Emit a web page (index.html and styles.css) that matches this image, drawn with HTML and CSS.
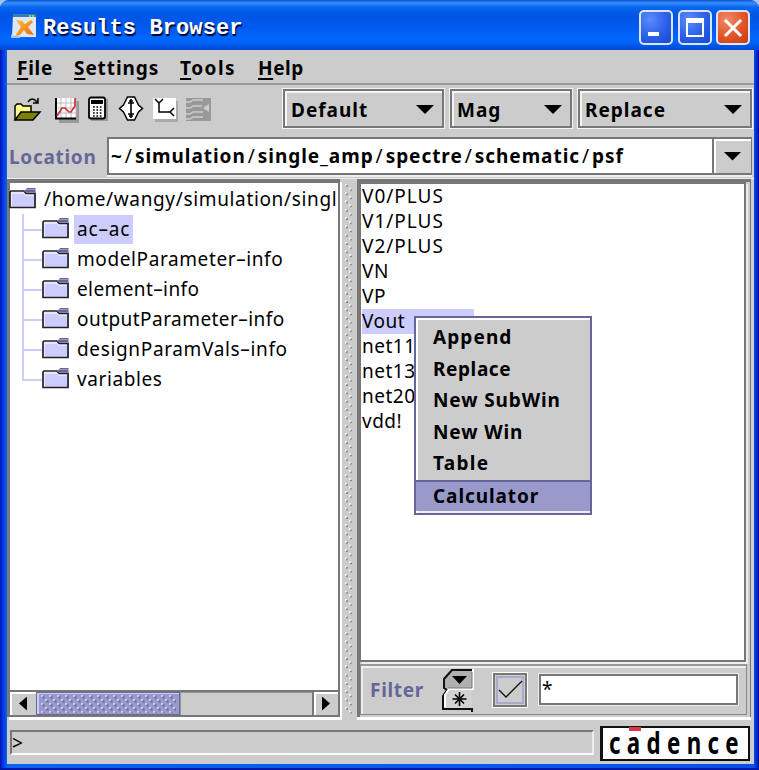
FILE: index.html
```html
<!DOCTYPE html>
<html lang="en">
<head>
<meta charset="utf-8">
<title>Results Browser</title>
<link rel="stylesheet" href="styles.css">
</head>
<body>
<div class="window">
  <header class="titlebar">
    <svg class="app-icon" width="27" height="25" viewBox="0 0 27 25">
      <defs><linearGradient id="orange" x2="1" y2="1"><stop stop-color="#ffc13b"/><stop offset="1" stop-color="#f0650c"/></linearGradient></defs>
      <path d="M2 1h23v22H1z" fill="#dce9f5"/><path d="M2 0h23v3H2z" fill="#3b79b8"/>
      <path d="M18 2h2M21 2h2" stroke="#7be04d" stroke-width="2"/><path d="M0 20l2 2h7v2H0z" fill="#9ec0f5"/>
      <path d="M5 6l6 1 3 3 6-4 2 2-5 5 6 8-7-1-3-4-4 5-5 1 6-9z" fill="url(#orange)"/>
    </svg>
    <h1 class="title">Results Browser</h1>
    <div class="controls">
      <span class="control"><svg width="31" height="31" viewBox="0 0 31 31"><path d="M7 20h11v4H7z" fill="#fff"/></svg></span>
      <span class="control"><svg width="31" height="31" viewBox="0 0 31 31"><path d="M7 8v16h16V8z" fill="none" stroke="#fff" stroke-width="2"/><path d="M6 6h18v5H6z" fill="#fff"/></svg></span>
      <span class="control close"><svg width="31" height="31" viewBox="0 0 31 31"><path d="M7 8l16 16M23 8L7 24" stroke="#fff" stroke-width="3"/></svg></span>
    </div>
  </header>
  <main class="client">
    <nav class="menubar">
      <span class="m-file"><u>F</u>ile</span><span class="m-settings"><u>S</u>ettings</span><span class="m-tools"><u>T</u>ools</span><span class="m-help"><u>H</u>elp</span>
    </nav>
    <div class="toolbar">
      <svg class="tools" width="204" height="34" viewBox="0 0 204 34">
        <g stroke="#000" stroke-width="1.5">
          <path d="M2 24V10l2-2h4l2 2h8v6" fill="#ffff8c"/><path d="M2 24l6-8h19l-7 8z" fill="#808000"/>
          <path d="M15 6q4-6 9 0M25 2v5h-5" fill="none"/>
        </g>
        <path d="M46 5h20v22H46z" fill="#999"/><path d="M43 2h20v20H43z" fill="#fff"/>
        <path d="M48 2v20M53 2v20M58 2v20M63 2v20M43 7h20M43 12h20M43 17h20" stroke="#bbb"/>
        <path d="M43 2v20.500h20" fill="none" stroke="#000" stroke-width="2"/><path d="M44 20l5-8h3l4 4h2l4-6V2" fill="none" stroke="#d22e3d" stroke-width="1.7"/>
        <path d="M78 3h17v22H78z" fill="#999"/><rect x="76" y="1.500" width="16" height="21" rx="2" fill="#fff" stroke="#000" stroke-width="1.800"/>
        <path d="M78 4h12v4H78z"/><path d="M80 11h9M80 14h9M80 17h9M80 20h9" stroke="#000" stroke-width="1.500" stroke-dasharray="1.700 1.700"/>
        <path d="M114.500 1h7l3 6 1 2 4 3.500-4 3.500-1 2-3 6h-7l-3-6-1-2-4-3.500 4-3.500 1-2z" fill="#fff" stroke="#000" stroke-width="1.500"/>
        <path d="M118 3v19M115 7h6M115 18h6M116 5h4M116 20h4" stroke="#000" stroke-width="1.600"/>
        <path d="M142 5h23v21h-23z" fill="#aaa"/><path d="M140 2h23v21h-23z" fill="#fff"/>
        <path d="M142 3l4 4 4-4M146 7v9h11M161 12l-4 4 4 4" fill="none" stroke="#000" stroke-width="1.500"/>
        <path d="M173 2h25v23h-25z" fill="#999"/><path d="M173 6h4l3-2h10M173 12h4l3-2h9M173 18h4l3-2h10M173 23h4l3-2h10" fill="none" stroke="#ccc" stroke-width="1.500"/><path d="M196 8v8l-6-4z" fill="#ccc"/>
      </svg>
      <div class="combo c-default"><span>Default</span><i class="down"></i></div>
      <div class="combo c-mag"><span>Mag</span><i class="down"></i></div>
      <div class="combo c-replace"><span>Replace</span><i class="down"></i></div>
    </div>
    <div class="location">
      <label class="loc-label">Location</label>
      <div class="loc-box"><span class="path">~<i>/</i>simulation<i>/</i>single_amp<i>/</i>spectre<i>/</i>schematic<i>/</i>psf</span><span class="loc-button"><i class="down"></i></span></div>
    </div>
    <div class="split">
      <section class="left-pane">
        <div class="tree">
          <div class="node root"><svg class="folder"><use href="#folder"/></svg><span class="t-root">/home/wangy/simulation/singl</span></div>
          <div class="children">
            <div class="node"><svg class="folder"><use href="#folder"/></svg><span class="selected">ac–ac</span></div>
            <div class="node"><svg class="folder"><use href="#folder"/></svg><span class="t-model">modelParameter–info</span></div>
            <div class="node"><svg class="folder"><use href="#folder"/></svg><span class="t-element">element–info</span></div>
            <div class="node"><svg class="folder"><use href="#folder"/></svg><span class="t-output">outputParameter–info</span></div>
            <div class="node"><svg class="folder"><use href="#folder"/></svg><span class="t-design">designParamVals–info</span></div>
            <div class="node"><svg class="folder"><use href="#folder"/></svg><span class="t-variables">variables</span></div>
          </div>
        </div>
        <div class="scrollbar"><span class="arrow"><i class="west"></i></span><span class="thumb"><svg width="135" height="18"><rect width="135" height="18" fill="url(#grip)"/></svg></span><span class="track"></span><span class="arrow last"><i class="east"></i></span></div>
      </section>
      <div class="divider"><svg width="8" height="530"><rect width="8" height="530" fill="url(#dots)"/></svg></div>
      <section class="right-pane">
        <ul class="signals">
          <li class="caps">V0/PLUS</li><li class="caps">V1/PLUS</li><li class="caps">V2/PLUS</li><li>VN</li><li>VP</li><li class="picked">Vout</li><li class="net">net11</li><li class="net">net13</li><li class="net">net20</li><li>vdd!</li>
        </ul>
        <div class="filter">
          <span class="filter-label">Filter</span>
          <svg class="switch" width="34" height="46" viewBox="0 0 34 46">
            <path d="M3 21V11l8-8h20v19H5z" fill="#b0b0b0"/><path d="M31 22H7l-5 5v15h29z" fill="#d2d2d2"/>
            <path d="M31 3H11l-8 9v9l3 2-4 6v13h29v3" fill="none" stroke="#111" stroke-width="2"/><path d="M32 2v20H8l-4 6v12" fill="none" stroke="#fff" stroke-width="2"/><path d="M31 5v16H7" fill="none" stroke="#777"/>
            <path d="M11 9h15l-7.500 8z"/><path d="M18.500 25v14M11.500 32h14M14 27.500l9 9M23 27.500l-9 9" stroke="#000" stroke-width="1.600"/>
          </svg>
          <span class="check"><svg width="28" height="28" viewBox="0 0 28 28"><path d="M3 14l7 7L26 5" fill="none" stroke="#111" stroke-width="1.300"/></svg></span>
          <span class="filter-input">*</span>
        </div>
      </section>
    </div>
    <footer class="status">
      <div class="message">&gt;</div>
      <div class="brand"><span>cadence</span><i class="macron"></i></div>
    </footer>
  </main>
  <div class="popup">
    <div class="p-append">Append</div><div class="p-replace">Replace</div><div class="p-sub">New SubWin</div><div class="p-win">New Win</div><div class="p-table">Table</div><div class="hover">Calculator</div>
  </div>
</div>
<svg class="defs" width="0" height="0">
  <defs>
    <symbol id="folder" viewBox="0 0 28 24"><path d="M1 5h26v16H1z" fill="#ccf"/><path d="M2 20V6h13l2 2h8" fill="none" stroke="#fff" stroke-width="1.200"/><path d="M1 20.500V5l1-1h13l2 2.500h9v14z" fill="none" stroke="#222" stroke-width="1.700"/><path d="M15 4.500L18 1h8.500v4.500H17z" fill="#669"/><path d="M17 2.500h9" stroke="#99b"/></symbol>
    <pattern id="dots" width="8" height="8.300" patternUnits="userSpaceOnUse"><path d="M0 0h1.800v1.800H0zM4 4h1.800v1.800H4z" fill="#fff"/><path d="M1.200 1.200h1.600v1.600H1.200zM5.200 5.200h1.600v1.600H5.200z" fill="#777"/></pattern>
    <pattern id="grip" width="8" height="8" patternUnits="userSpaceOnUse"><path d="M0 0h2v2H0zM4 4h2v2H4z" fill="#ccf"/><path d="M1.500 1.500h2v2h-2zM5.500 5.500h2v2h-2z" fill="#669"/></pattern>
  </defs>
</svg>
</body>
</html>
```
FILE: styles.css
```css
* { box-sizing: border-box; }
body { margin: 0; font-family: "Noto Sans", sans-serif; font-size: 19px; color: #000; background: #a8c0ee; overflow: hidden; }
.window { position: relative; width: 759px; height: 770px; border-radius: 9px 9px 0 0; background: linear-gradient(90deg, #0010b8 0, #0038dc 3px, #0a63f0 7px, #0a50e8 754px, #0030d8 756px, #0010a0 759px); overflow: hidden; border-bottom: 2px solid #0018a8; }
.titlebar { height: 50px; display: flex; align-items: flex-start; padding: 0 9px 0 11px; background: linear-gradient(#0b53d0 0, #3590ff 3px, #0a68ee 7px, #0056e5 14px, #0058ee 27px, #0068ff 38px, #0062f5 43px, #0045d0 50px); }
.app-icon { margin-top: 14px; }
.title { margin: 14px 0 0 5px; font: bold 22px/30px "Liberation Mono", monospace; letter-spacing: .1px; color: #fff; text-shadow: 1px 2px 1px #003; white-space: pre; }
.controls { display: flex; gap: 4px; margin: 10px 0 0 auto; }
.control { width: 34px; height: 35px; border: 2px solid #dbe5ff; border-radius: 5px; background: radial-gradient(circle at 30% 25%, #5c8bf8, #2a60ea 55%, #1747d0); }
.control:first-child { margin-right: 1px; }
.control.close { background: radial-gradient(circle at 30% 25%, #f08b6e, #e15427 55%, #c63b0c); }
.control svg { display: block; }
.client { margin-left: 7px; width: 747px; height: 714px; background: #ccc; }
.menubar { height: 35px; border-bottom: 2px solid #999; font-weight: bold; line-height: 36px; display: flex; padding-left: 10px; }
.menubar span { flex: none; }
.menubar u { text-decoration-thickness: 2px; text-underline-offset: 3px; }
.m-file { width: 57px; letter-spacing: .7px; }
.m-settings { width: 106px; letter-spacing: .9px; }
.m-tools { width: 78px; letter-spacing: 1.500px; }
.m-help { letter-spacing: .6px; }
.toolbar { height: 51px; padding: 4px 3px 0 6px; display: flex; }
.tools { flex: none; margin-top: 7px; }
.combo { height: 39px; border: 2px solid #777; outline: 1px solid #f5f5f5; box-shadow: inset 2px 2px #f5f5f5; display: flex; align-items: center; justify-content: space-between; padding: 2px 8px 0 6px; font-weight: bold; letter-spacing: 1px; flex: none; }
.c-default { width: 161px; margin-left: 66px; }
.c-mag { width: 122px; margin-left: 6px; padding-left: 5px; }
.c-replace { width: 174px; margin-left: 6px; padding-left: 5px; }
.down { width: 18px; height: 9px; background: #000; clip-path: polygon(0 0, 100% 0, 50% 100%); }
.location { height: 42px; display: flex; padding: 1px 2px 0 2px; }
.loc-label { width: 98px; color: #669; font-weight: bold; line-height: 41px; letter-spacing: .7px; }
.loc-box { flex: 1; height: 38px; display: flex; background: #fff; border: 2px solid #777; border-right-width: 1px; box-shadow: 0 2px #eee; }
.path { flex: 1; font-weight: bold; line-height: 34px; padding-left: 2px; letter-spacing: .95px; white-space: nowrap; }
.path i { font-style: normal; font-weight: normal; padding: 0 1px 0 2px; letter-spacing: 2px; }
.loc-button { width: 39px; background: #ccc; border-left: 2px solid #777; box-shadow: inset 2px 2px #fff; display: flex; justify-content: center; align-items: center; }
.split { height: 541px; display: flex; border-top: 1px solid #eee; }
.left-pane { width: 333px; height: 538px; border: solid #777; border-width: 4px 2px 2px 3px; box-shadow: 2px 3px #fff; }
.tree { height: 507px; background: #fff; white-space: nowrap; }
.node { height: 30px; display: flex; align-items: center; margin-left: -1px; }
.root { padding-top: 1px; height: 31px; }
.folder { width: 28px; height: 24px; flex: none; margin-right: 5px; }
.root span { padding-left: 2px; }
.children { margin-left: 12px; width: 300px; height: 180px; background: linear-gradient(#ccf, #ccf) 0 0 / 2px 165px no-repeat; }
.children .node { padding-left: 21px; background: linear-gradient(#ccf, #ccf) 1px 15px / 20px 2px no-repeat; }
.children span { line-height: 29px; }
.selected { background: #ccf; padding: 0 3px; margin-left: -1px; letter-spacing: .8px; }
.children span:not(.selected) { padding-left: 2px; }
.t-root { letter-spacing: .65px; }
.t-model { letter-spacing: .6px; }
.t-element { letter-spacing: .4px; }
.t-output { letter-spacing: .45px; }
.t-design { letter-spacing: .65px; }
.t-variables { letter-spacing: .6px; }
.scrollbar { height: 25px; display: flex; border-top: 2px solid #777; background: #ccc; }
.arrow { width: 26px; display: flex; align-items: center; justify-content: center; box-shadow: inset 2px 2px #fff; }
.arrow.last { border-left: 2px solid #777; }
.west, .east { width: 8px; height: 14px; background: #000; clip-path: polygon(100% 0, 100% 100%, 0 50%); }
.east { clip-path: polygon(0 0, 100% 50%, 0 100%); }
.thumb { width: 144px; padding: 2px 4px; background: #99c; border: 1px solid #669; box-shadow: inset 2px 1px #ccf; }
.thumb svg { display: block; }
.track { flex: 1; box-shadow: inset 1px 1px #999; }
.divider { width: 17px; padding: 5px 0 0 5px; }
.divider svg { display: block; }
.right-pane { width: 394px; height: 538px; border: solid #777; border-width: 3px 1px 0 3px; box-shadow: 0 3px #fff; }
.signals { margin: 0 4px 0 0; padding: 0 0 0 1px; list-style: none; height: 480px; border: 2px solid #777; border-left-width: 1px; background: #fff; line-height: 25px; box-shadow: 2px 2px #eee; }
.signals li { height: 25px; letter-spacing: .5px; }
.signals .caps { letter-spacing: 1px; }
.picked { background: #ccf; width: 112px; }
.filter { height: 51px; margin: 2px 3px 0 0; border: 1px solid #888; border-top: 2px solid #999; display: flex; align-items: center; box-shadow: inset 2px 2px #eee; padding-left: 9px; }
.filter-label { width: 71px; color: #669; font-weight: bold; letter-spacing: .7px; }
.switch { flex: none; }
.check { width: 34px; height: 34px; margin-left: 18px; border: 2px solid #777; outline: 1px solid #fff; box-shadow: inset 0 0 0 1px #ccc, inset 0 0 0 3px #aac; }
.check svg { display: block; margin: 1px; }
.filter-input { width: 199px; height: 31px; margin: -2px 0 0 12px; background: #fff; border: 2px solid #777; outline: 1px solid #eee; line-height: 27px; padding-left: 1px; }
.status { height: 44px; display: flex; padding: 7px 4px 0 3px; }
.message { width: 584px; height: 25px; margin-top: 4px; border: 2px solid #777; border-right-color: #eee; border-bottom-color: #fff; line-height: 23px; }
.brand { position: relative; width: 150px; height: 35px; margin-left: 6px; border: 2px solid #111; border-left-width: 3px; background: #fff; padding-left: 6px; font: bold 31px/29px "Noto Sans", sans-serif; white-space: nowrap; }
.brand span { display: inline-block; letter-spacing: 8.800px; transform: scaleX(.72); transform-origin: 0 0; }
.macron { position: absolute; left: 26px; top: -1px; width: 12px; height: 4px; background: #dc3548; }
.popup { position: absolute; left: 414px; top: 316px; width: 178px; height: 199px; border: 2px solid #669; box-shadow: inset 2px 2px #fff, inset 0 -3px #eee; background: #ccc; padding-top: 4px; font-weight: bold; line-height: 31px; letter-spacing: .9px; }
.popup div { height: 31.600px; padding-left: 17px; white-space: nowrap; }
.popup .hover { background: #99c; border-top: 2px solid #669; line-height: 29px; height: 31px; }
.p-append { letter-spacing: 1.100px; }
.p-replace { letter-spacing: .6px; }
.p-table { letter-spacing: 1.300px; }
.defs { position: absolute; }
```
